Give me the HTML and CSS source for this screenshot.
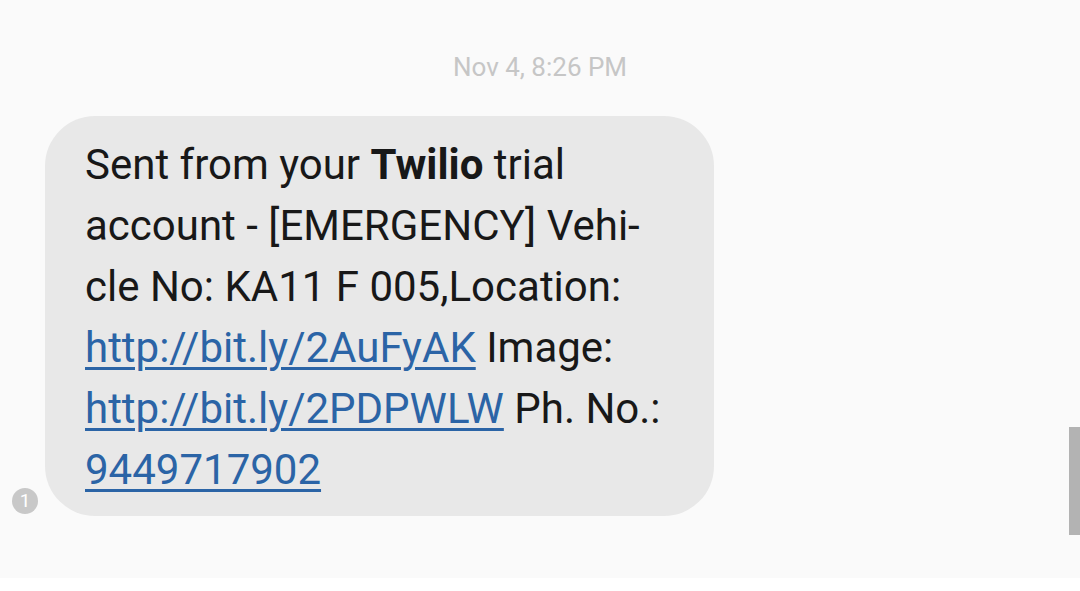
FILE: index.html
```html
<!DOCTYPE html>
<html>
<head>
<meta charset="utf-8">
<link rel="stylesheet" href="styles.css">
</head>
<body>
<div class="screen">
  <div class="thread">
    <div class="timestamp">Nov 4, 8:26 PM</div>
    <div class="row">
      <div class="badge">1</div>
      <div class="bubble">Sent from your <b>Twilio</b> trial<br>account - [EMERGENCY] Vehi-<br>cle No: KA11 F 005,Location:<br><a class="link" href="#">http://bit.ly/2AuFyAK</a> Image:<br><a class="link" href="#">http://bit.ly/2PDPWLW</a> Ph. No.:<br><a class="link" href="#">9449717902</a></div>
    </div>
    <div class="scrollbar"></div>
  </div>
  <div class="footer"></div>
</div>
</body>
</html>
```

FILE: styles.css
```css
html, body {
  margin: 0;
  padding: 0;
  background: #fafafa;
}
.screen {
  width: 1080px;
  height: 591px;
  display: flex;
  flex-direction: column;
  font-family: Roboto, "Noto Sans", sans-serif;
  overflow: hidden;
}
.thread {
  position: relative;
  height: 578px;
  background: #fafafa;
  display: flex;
  flex-direction: column;
}
.timestamp {
  margin-top: 52px;
  height: 30px;
  line-height: 30px;
  text-align: center;
  font-size: 26px;
  color: #c6c6c6;
}
.row {
  margin-top: 34px;
  display: flex;
  align-items: flex-end;
}
.badge {
  margin-left: 12px;
  margin-bottom: 2px;
  width: 26px;
  height: 26px;
  border-radius: 50%;
  background: #c8c8c8;
  color: #fff;
  font-size: 19px;
  line-height: 26px;
  text-align: center;
}
.bubble {
  margin-left: 7px;
  width: 629px;
  padding: 18px 0 16px 40px;
  background: #e8e8e8;
  border-radius: 50px;
  font-size: 42px;
  line-height: 61px;
  color: #181818;
}
.bubble b {
  font-weight: 700;
}
.link {
  color: #2b64a6;
  text-decoration: underline;
  text-decoration-thickness: 3px;
  text-underline-offset: 5px;
}
.scrollbar {
  position: absolute;
  right: 0;
  top: 427px;
  width: 11px;
  height: 108px;
  background: #b3b3b3;
}
.footer {
  height: 13px;
  background: #ffffff;
  box-shadow: 0 -1px 2px rgba(0,0,0,0.04);
}
```
